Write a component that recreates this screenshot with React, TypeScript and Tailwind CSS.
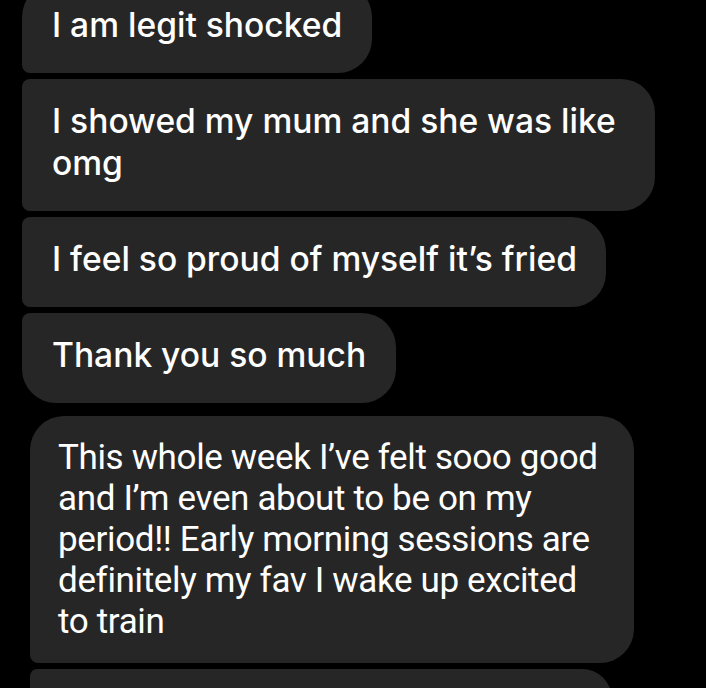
const sf = { fontFamily: 'Inter, "Noto Sans", sans-serif' };

type Corner = 'first' | 'middle' | 'last';

function Bubble({ text, pos, className = '' }: { text: string; pos: Corner; className?: string }) {
  const corners =
    pos === 'first'
      ? 'rounded-[34px] rounded-bl-[8px]'
      : pos === 'middle'
        ? 'rounded-r-[34px] rounded-l-[8px]'
        : 'rounded-[34px] rounded-tl-[8px]';
  return (
    <div className={`w-fit bg-[#262626] pt-[21px] pb-[27px] pl-[30px] text-white ${corners} ${className}`}>
      <p className="whitespace-pre-line">{text}</p>
    </div>
  );
}

export default function App() {
  return (
    <div className="h-[688px] w-[706px] overflow-hidden bg-black">
      <div className="mt-[-17px] flex flex-col gap-[6px] pl-[22px] text-[33.6px] font-medium leading-[42px]" style={sf}>
        <Bubble pos="first" text="I am legit shocked" className="pr-[30px]" />
        <Bubble pos="middle" text={'I showed my mum and she was like\nomg'} className="pr-[39px]" />
        <Bubble pos="middle" text="I feel so proud of myself it’s fried" className="pr-[29px]" />
        <Bubble pos="last" text="Thank you so much" className="pr-[30px]" />
      </div>

      <div
        className="mt-[13px] flex flex-col gap-[6px] pl-[30px] text-[35px] font-normal leading-[41px] tracking-[-0.35px]"
        style={{ fontFamily: 'Roboto, "Noto Sans", sans-serif' }}
      >
        <div className="w-[604px] whitespace-pre-line rounded-[34px] rounded-bl-[8px] bg-[#262626] px-[28px] py-[21px] text-white">
          {'This whole week I’ve felt sooo good\nand I’m even about to be on my\nperiod!! Early morning sessions are\ndefinitely my fav I wake up excited\nto train'}
        </div>
        <div className="h-[60px] w-[582px] rounded-r-[34px] rounded-l-[8px] bg-[#262626]" />
      </div>
    </div>
  );
}
